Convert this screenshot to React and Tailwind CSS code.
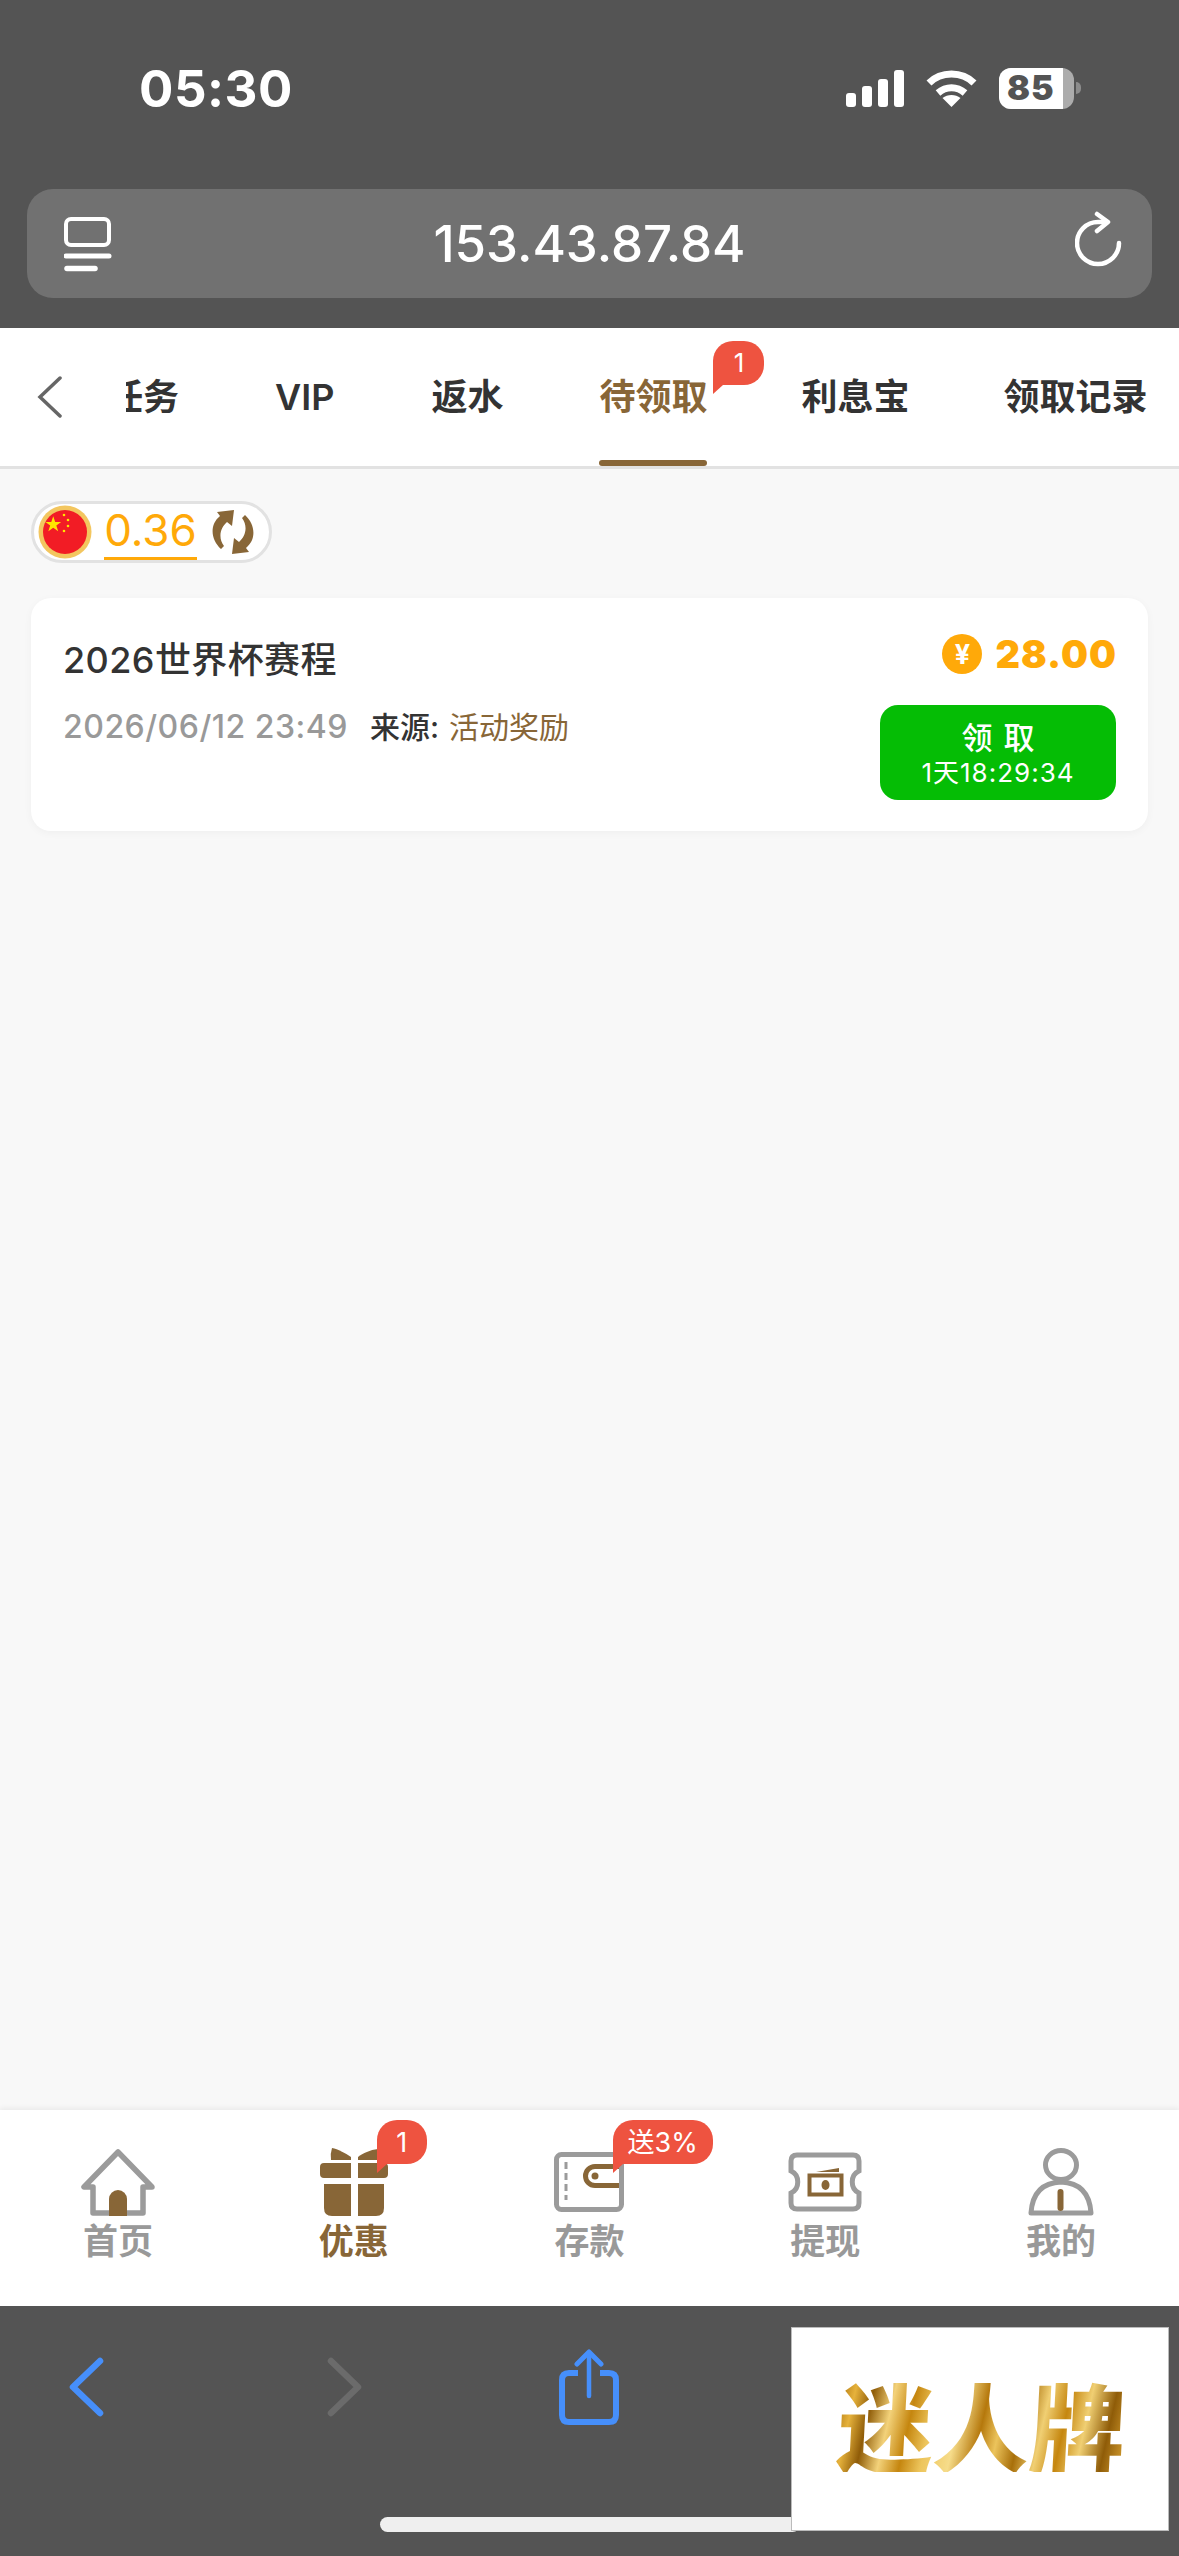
import React from 'react';

const SANS = 'font-["Inter","Noto_Sans_CJK_SC",sans-serif]';

const tabs = [
  { label: '任务' },
  { label: 'VIP' },
  { label: '返水', gap: 'ml-[1px]' },
  { label: '待领取' },
  { label: '利息宝', gap: '-ml-[2px]' },
  { label: '领取记录', gap: '-ml-[2px]' },
];

const Tail = () => (
  <span className="absolute left-0 top-full w-0 h-0 border-t-[9px] border-r-[10px] border-t-[#ee5340] border-r-transparent" />
);

const HomeIcon = () => (
  <svg width="74" height="67" viewBox="0 0 74 67">
    <path d="M37 3L3 38h9v26h50V38h9z" fill="none" stroke="#9b9b9b" strokeWidth="5.5" strokeLinejoin="round" />
    <path d="M28 67V50a9 9 0 0 1 18 0v17z" fill="#886637" />
  </svg>
);

const GiftIcon = () => (
  <svg width="68" height="68" viewBox="0 0 68 68" fill="#886637">
    <path d="M12 0c6 1 13 5 19 9v3H11q-1-6 1-12z" />
    <path d="M38 12V9c5-4 12-7 20-8v11z" />
    <path d="M0 19q0-4 4-4h27v15H4q-4 0-4-4zM38 15h26q4 0 4 4v7q0 4-4 4H38z" />
    <path d="M4 36h27v32H12q-8 0-8-8zM38 36h26v24q0 8-8 8H38z" />
  </svg>
);

const WalletIcon = () => (
  <svg width="70" height="60" viewBox="0 0 70 60" fill="none">
    <rect x="2.5" y="2.5" width="65" height="55" rx="5" stroke="#9b9b9b" strokeWidth="5" />
    <path d="M12 10v38" stroke="#9b9b9b" strokeWidth="3" strokeDasharray="7 4" />
    <path d="M65 14.5H41a9.500 9.500 0 0 0 0 19h24" stroke="#886637" strokeWidth="5" />
    <circle cx="41" cy="24" r="3.500" fill="#886637" />
  </svg>
);

const TicketIcon = () => (
  <svg width="74" height="60" viewBox="0 0 74 60" fill="none">
    <path d="M9 3h56q6 0 6 6v10c-9 4-9 18 0 22v10q0 6-6 6H9q-6 0-6-6V41c9-4 9-18 0-22V9q0-6 6-6z" stroke="#9b9b9b" strokeWidth="5" />
    <path d="M28 20l23-4v4z" fill="#886637" />
    <rect x="21.500" y="23.500" width="32" height="19" stroke="#886637" strokeWidth="4" />
    <ellipse cx="37.500" cy="33" rx="4" ry="5" fill="#886637" />
  </svg>
);

const PersonIcon = () => (
  <svg width="66" height="68" viewBox="0 0 66 68" fill="none">
    <ellipse cx="33" cy="17" rx="15.500" ry="14.500" stroke="#9b9b9b" strokeWidth="5" />
    <path d="M3 65q2-30 30-31q28 1 30 31z" stroke="#9b9b9b" strokeWidth="5" strokeLinejoin="round" />
    <rect x="29.500" y="41" width="6" height="22" rx="3" fill="#886637" />
  </svg>
);

const navItems = [
  { label: '首页', icon: HomeIcon },
  { label: '优惠', icon: GiftIcon, active: true, badge: '1', badgeClass: 'w-[50px]' },
  { label: '存款', icon: WalletIcon, badge: '送3%', badgeClass: 'w-[100px]' },
  { label: '提现', icon: TicketIcon },
  { label: '我的', icon: PersonIcon },
];

export default function App() {
  return (
    <div className={`relative flex flex-col w-[1179px] h-[2556px] overflow-hidden bg-[#f8f8f8] ${SANS}`}>
      {/* Safari top chrome */}
      <header className="h-[328px] shrink-0 bg-[#545454] pt-[60px] text-white">
        <div className="flex items-center h-[56px] pl-[139px]">
          <span className="text-[51px] font-bold leading-none tracking-[0.5px]">05:30</span>
          <div className="flex items-end gap-[6px] ml-[553px] h-[37px]">
            <i className="w-[10px] h-[14px] rounded-[3px] bg-white" />
            <i className="w-[10px] h-[21px] rounded-[3px] bg-white" />
            <i className="w-[10px] h-[28px] rounded-[3px] bg-white" />
            <i className="w-[10px] h-[37px] rounded-[3px] bg-white" />
          </div>
          <svg className="ml-[22px]" width="51" height="38" viewBox="0 0 51 38" fill="none" stroke="#fff" strokeWidth="7">
            <path d="M3 14C15 2 36 2 48 14" />
            <path d="M12 24c8-7 19-7 27 0" />
            <path d="M25.500 38l-9-9c5-4 13-4 18 0z" fill="#fff" stroke="none" />
          </svg>
          <div className="ml-[22px] relative flex items-center h-[41px] w-[75px] rounded-[12px] overflow-hidden bg-[#acacac]">
            <div className="h-full w-[64px] bg-white flex items-center justify-center text-[#545454] text-[34px] font-black leading-none tracking-[1px]">85</div>
          </div>
          <i className="ml-[2px] w-[5px] h-[12px] rounded-r-full bg-[#8c8c8c]" />
        </div>
        <div className="relative flex items-center justify-center mt-[73px] mx-[27px] h-[109px] rounded-[26px] bg-[#717171]">
          <svg className="absolute left-[37px] top-[28px]" width="48" height="55" viewBox="0 0 48 55" fill="none" stroke="#fff">
            <rect x="2" y="2" width="43" height="26" rx="5" strokeWidth="4" />
            <path d="M2 39h43" strokeWidth="5" strokeLinecap="round" />
            <path d="M3 51.500h28" strokeWidth="5.500" strokeLinecap="round" />
          </svg>
          <span className="text-[51px] font-medium leading-none">153.43.87.84</span>
          <svg className="absolute left-[1048px] top-[22px]" width="50" height="58" viewBox="0 0 50 58" fill="none" stroke="#fff" strokeWidth="4.500" strokeLinecap="round" strokeLinejoin="round">
            <path d="M44 32a21 21 0 1 1-21-21h9" />
            <path d="M22 3l11 8-11 9" />
          </svg>
        </div>
      </header>

      {/* Tabs */}
      <nav className="relative flex items-center h-[141px] shrink-0 bg-white border-b-[3px] border-[#e2e2e2]">
        <svg className="ml-[36px] shrink-0" width="28" height="42" viewBox="0 0 28 42" fill="none" stroke="#666" strokeWidth="3.500" strokeLinecap="round">
          <path d="M24 2L4 21l20 19" />
        </svg>
        <div className="flex-1 h-full overflow-hidden ml-[62px]">
          <div className="flex h-full gap-[96px] -ml-[19px] whitespace-nowrap">
            {tabs.map(({ label, gap }) => {
              const active = label === '待领取';
              return (
                <div key={label} className={`relative flex items-center shrink-0 text-[36px] font-semibold ${gap || ''} ${active ? 'text-[#886637]' : 'text-[#333]'}`}>
                  {label}
                  {active && <span className="absolute left-0 right-0 bottom-0 h-[6px] rounded-full bg-[#886637]" />}
                  {active && (
                    <span className="absolute left-[114px] top-[13px] flex items-center justify-center w-[51px] h-[44px] rounded-[20px] rounded-bl-none bg-[#ee5340] text-white text-[26px] font-normal leading-none">
                      1
                      <Tail />
                    </span>
                  )}
                </div>
              );
            })}
          </div>
        </div>
      </nav>

      {/* Content */}
      <main className="flex-1 min-h-0 px-[31px] pt-[32px]">
        <div className="flex items-center w-[241px] h-[62px] rounded-full border-[3px] border-[#e2e2e2] bg-white pl-[4px]">
          <svg width="54" height="54" viewBox="0 0 54 54" className="shrink-0">
            <circle cx="27" cy="27" r="26.500" fill="#f3c65f" />
            <circle cx="27" cy="27" r="22" fill="#f21c25" />
            <path d="M15 12l2.300 6.800h7l-5.700 4.200 2.200 6.800-5.800-4.200-5.800 4.200 2.200-6.800-5.700-4.200h7z" fill="#ffe600" transform="translate(2.500 1) scale(.85)" />
            <circle cx="26" cy="10" r="1.300" fill="#ffe600" />
            <circle cx="30" cy="15" r="1.300" fill="#ffe600" />
            <circle cx="30" cy="21" r="1.300" fill="#ffe600" />
            <circle cx="26" cy="26" r="1.300" fill="#ffe600" />
          </svg>
          <span className="ml-[12px] w-[93px] h-[55px] border-b-[3px] border-[#ffa909] text-[#ffa909] text-[44px] leading-[50px] text-center">0.36</span>
          <svg className="ml-[13px] shrink-0" width="46" height="48" viewBox="0 0 46 48" fill="#886637">
            <path d="M11 41C1 32-1 17 10 8l-3-4 17-2-2 16-5-4C10 20 8 30 14 38z" />
            <path d="M35 7c10 9 12 24 1 33l3 4-17 2 2-16 5 4c7-6 9-16 3-24z" />
          </svg>
        </div>

        <section className="flex justify-between h-[233px] mt-[35px] rounded-[20px] bg-white pl-[32px] pr-[32px] pt-[36px] shadow-[0_2px_8px_rgba(0,0,0,0.04)]">
          <div>
            <div className="text-[36px] font-medium leading-[52px] text-[#333] tracking-[0.4px]">2026世界杯赛程</div>
            <div className="flex items-center mt-[21px] text-[30px] leading-[40px]">
              <span className="text-[32px] text-[#999] font-medium tracking-[0.5px]">2026/06/12 23:49</span>
              <span className="ml-[22px] text-[#333] font-medium">来源:</span>
              <span className="ml-[10px] text-[#886637]">活动奖励</span>
            </div>
          </div>
          <div className="flex flex-col items-end">
            <div className="flex items-center h-[40px] -mr-[1px]">
              <span className="flex items-center justify-center w-[40px] h-[40px] rounded-full bg-[#ffa909] text-white text-[27px] font-bold leading-none">¥</span>
              <span className="ml-[13px] text-[38px] font-black leading-none tracking-[1px] text-[#ffa909]">28.00</span>
            </div>
            <button className="flex flex-col items-center justify-center w-[236px] h-[95px] mt-[31px] rounded-[18px] bg-[#05bd05] text-white">
              <span className="text-[31px] font-medium leading-[40px] tracking-[11px] ml-[11px]">领取</span>
              <span className="text-[26px] leading-[30px] tracking-[1px]">1天18:29:34</span>
            </button>
          </div>
        </section>
      </main>

      {/* Bottom tab bar */}
      <nav className="grid grid-cols-5 h-[196px] shrink-0 bg-white pt-[38px] shadow-[0_-2px_5px_rgba(0,0,0,0.06)]">
        {navItems.map(({ label, icon: Icon, active, badge, badgeClass }) => (
          <div key={label} className="relative flex flex-col items-center">
            <div className="flex items-center justify-center h-[68px]">
              <Icon />
            </div>
            <span className={`mt-[4px] text-[35px] leading-[42px] ${active ? 'font-bold text-[#886637]' : 'font-semibold text-[#999]'}`}>{label}</span>
            {badge && (
              <span className={`absolute left-[141px] top-[-28px] flex items-center justify-center h-[44px] rounded-[20px] rounded-bl-none bg-[#ee5340] text-white text-[27px] leading-none ${badgeClass}`}>
                {badge}
                <Tail />
              </span>
            )}
          </div>
        ))}
      </nav>

      {/* Safari bottom toolbar */}
      <footer className="flex items-start h-[250px] shrink-0 bg-[#545454] pt-[43px]">
        <div className="flex items-center h-[76px]">
          <svg className="ml-[68px]" width="38" height="60" viewBox="0 0 38 60" fill="none" stroke="#468ffb" strokeWidth="6.500" strokeLinecap="round" strokeLinejoin="round">
            <path d="M32 4L5 30l27 26" />
          </svg>
          <svg className="ml-[219px]" width="38" height="60" viewBox="0 0 38 60" fill="none" stroke="#6b6b6b" strokeWidth="6.500" strokeLinecap="round" strokeLinejoin="round">
            <path d="M6 4l27 26L6 56" />
          </svg>
          <svg className="ml-[196px]" width="60" height="76" viewBox="0 0 60 76" fill="none" stroke="#468ffb" strokeLinecap="round" strokeLinejoin="round">
            <path d="M19 24H10q-7 0-7 7v35q0 7 7 7h40q7 0 7-7V31q0-7-7-7h-9" strokeWidth="6" strokeLinecap="butt" />
            <path d="M30 47V4" strokeWidth="4.500" />
            <path d="M18 15L30 3l12 12" strokeWidth="5" />
          </svg>
        </div>
      </footer>

      {/* Home indicator and floating logo sit over the toolbar */}
      <div className="absolute left-[380px] top-[2517px] w-[420px] h-[15px] rounded-full bg-[#efefef]" />
      <div className="absolute left-[791px] top-[2327px] flex items-center justify-center w-[378px] h-[204px] border border-[#bbb] bg-white">
        <span className='-skew-x-3 ml-[4px] mt-[-10px] text-[96px] font-["Noto_Sans_CJK_SC",sans-serif] font-black leading-none text-transparent bg-clip-text bg-[linear-gradient(100deg,#a86f0a_0%,#e6b23c_6%,#8f5c08_12%,#f3d27a_19%,#c5860f_26%,#edc55c_33%,#f6dc8a_42%,#b5780c_50%,#ecc45c_56%,#a86f0a_63%,#f0cf73_70%,#c5860f_77%,#f0cf73_84%,#8f5c08_92%,#d9a233_100%)]'>迷人牌</span>
      </div>
    </div>
  );
}
